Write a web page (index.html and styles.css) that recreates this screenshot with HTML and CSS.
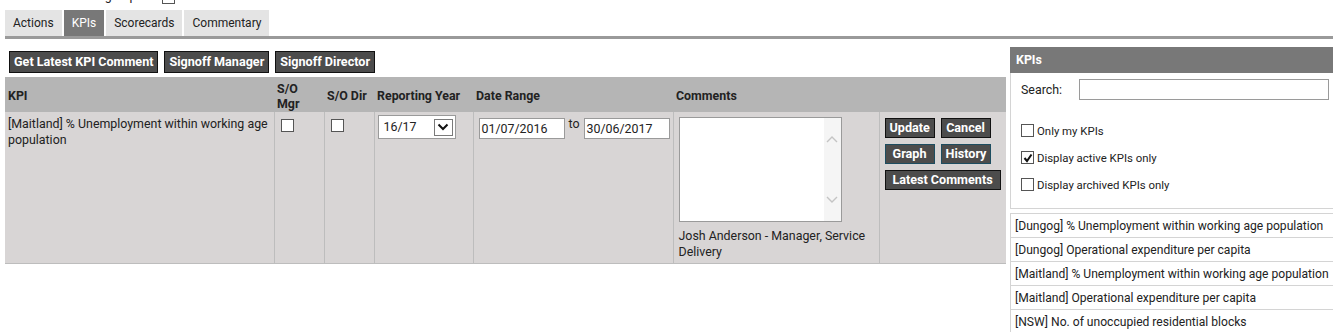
FILE: index.html
```html
<!DOCTYPE html>
<html>
<head>
    <meta charset='utf-8'>
    <title>KPIs</title>
    <link rel="stylesheet" href="styles.css">
</head>
<body>
    <div class='filter-strip'>
        <span class='filter-label'>Show grouped</span>
        <span class='check'></span>
    </div>
    <div class='tabs'>
        <div class='tab'>Actions</div>
        <div class='tab active'>KPIs</div>
        <div class='tab'>Scorecards</div>
        <div class='tab'>Commentary</div>
    </div>
    <div class='page'>
        <div class='main'>
            <div class='toolbar'>
                <div class='btn'>Get Latest KPI Comment</div>
                <div class='btn'>Signoff Manager</div>
                <div class='btn'>Signoff Director</div>
            </div>
            <table class='kpi-table'>
                <colgroup>
                    <col style="width: 269px">
                    <col style="width: 50px">
                    <col style="width: 50px">
                    <col style="width: 99px">
                    <col style="width: 200px">
                    <col style="width: 206px">
                    <col style="width: 127px">
                </colgroup>
                <thead>
                    <tr>
                        <th>KPI</th>
                        <th>S/O Mgr</th>
                        <th>S/O Dir</th>
                        <th>Reporting Year</th>
                        <th>Date Range</th>
                        <th>Comments</th>
                        <th></th>
                    </tr>
                </thead>
                <tbody>
                    <tr>
                        <td>[Maitland] % Unemployment within working age population</td>
                        <td><span class='check cell-check'></span></td>
                        <td><span class='check cell-check'></span></td>
                        <td>
                            <div class='select'>
                                <span class='select-value'>16/17</span>
                                <span class='select-btn'>
                                    <svg width="12" height="8" viewBox="0 0 12 8"><path d="M1.5 1.5 L6 6 L10.5 1.5" fill="none" stroke="#111" stroke-width="2"/></svg>
                                </span>
                            </div>
                        </td>
                        <td>
                            <div class='dates'>
                                <div class='field'>01/07/2016</div>
                                <span class='to'>to</span>
                                <div class='field'>30/06/2017</div>
                            </div>
                        </td>
                        <td>
                            <div class='textarea'>
                                <div class='scroll'>
                                    <svg width="12" height="8" viewBox="0 0 12 8"><path d="M1 7 L6 2 L11 7" fill="none" stroke="#c4c4c4" stroke-width="1.4"/></svg>
                                    <svg width="12" height="8" viewBox="0 0 12 8"><path d="M1 1 L6 6 L11 1" fill="none" stroke="#c4c4c4" stroke-width="1.4"/></svg>
                                </div>
                            </div>
                            <div class='author'>Josh Anderson - Manager, Service Delivery</div>
                        </td>
                        <td>
                            <div class='actions'>
                                <div class='btn small'>Update</div>
                                <div class='btn small'>Cancel</div>
                                <div class='btn small teal'>Graph</div>
                                <div class='btn small teal'>History</div>
                                <div class='btn small wide'>Latest Comments</div>
                            </div>
                        </td>
                    </tr>
                </tbody>
            </table>
        </div>
        <div class='side'>
            <div class='side-head'>KPIs</div>
            <div class='side-box'>
                <div class='search'>
                    <span class='search-label'>Search:</span>
                    <div class='search-input'></div>
                </div>
                <div class='option first'><span class='check'></span>Only my KPIs</div>
                <div class='option'>
                    <span class='check checked'>
                        <svg width="10" height="10" viewBox="0 0 10 10"><path d="M1.5 5 L4 8 L8.5 1.5" fill="none" stroke="#111" stroke-width="2"/></svg>
                    </span>Display active KPIs only
                </div>
                <div class='option'><span class='check'></span>Display archived KPIs only</div>
            </div>
            <div class='kpi-list'>
                <div class='kpi-item'>[Dungog] % Unemployment within working age population</div>
                <div class='kpi-item'>[Dungog] Operational expenditure per capita</div>
                <div class='kpi-item'>[Maitland] % Unemployment within working age population</div>
                <div class='kpi-item'>[Maitland] Operational expenditure per capita</div>
                <div class='kpi-item'>[NSW] No. of unoccupied residential blocks</div>
            </div>
        </div>
    </div>
</body>
</html>
```

FILE: styles.css
```css
body {
    margin: 0;
    padding: 0;
    font-family: Roboto, "Noto Sans", sans-serif;
    font-size: 12.4px;
    color: #222;
    background: #fff;
    overflow: hidden;
}
.filter-strip {
    height: 4px;
    overflow: hidden;
    display: flex;
    align-items: flex-end;
    padding-left: 71px;
    gap: 12px;
}
.filter-label {
    line-height: 12px;
    margin-bottom: 2px;
}
.tabs {
    display: flex;
    gap: 2px;
    margin: 6px 0 0 5px;
    border-bottom: 3px solid #9a9a9a;
}
.tab {
    background-color: #e4e4e4;
    font-size: 12px;
    height: 26px;
    line-height: 26px;
    padding: 0 8px;
}
.tab.active {
    background-color: #787878;
    color: #fff;
}
.page {
    display: flex;
    gap: 4px;
    padding-left: 5px;
}
.main {
    width: 1001px;
    flex-shrink: 0;
    padding-top: 12px;
}
.toolbar {
    display: flex;
    gap: 6px;
    padding-left: 4px;
    margin-bottom: 4px;
}
.btn {
    background-color: #4c4c4c;
    border: 1px solid #111;
    color: #fff;
    font-weight: bold;
    font-size: 12.6px;
    height: 20px;
    line-height: 20px;
    padding: 0 4px;
    white-space: nowrap;
}
.kpi-table {
    width: 1001px;
    table-layout: fixed;
    border-collapse: collapse;
}
.kpi-table th {
    background-color: #b5b5b5;
    text-align: left;
    font-weight: bold;
    height: 33px;
    padding: 2px 3px 0 3px;
    line-height: 15px;
    vertical-align: middle;
}
.kpi-table td {
    background-color: #d8d5d5;
    border: 1px solid #bdbdbd;
    border-top: none;
    vertical-align: top;
    padding: 4px 3px 3px 3px;
    height: 143px;
    line-height: 16px;
}
.kpi-table td:first-child {
    border-left: none;
}
.kpi-table td:last-child {
    border-right: none;
}
.check {
    display: inline-flex;
    justify-content: center;
    align-items: center;
    width: 11px;
    height: 11px;
    border: 1px solid #555;
    background: #fff;
    vertical-align: middle;
    flex-shrink: 0;
}
.cell-check {
    margin: 2px 0 0 3px;
}
.select {
    display: flex;
    align-items: center;
    justify-content: space-between;
    width: 71px;
    height: 22px;
    border: 1px solid #9a9a9a;
    background: #fff;
    padding-left: 5px;
    margin-top: -1px;
}
.select-btn {
    display: flex;
    justify-content: center;
    align-items: center;
    width: 19px;
    height: 17px;
    border: 1px solid #7a7a7a;
    margin-right: 2px;
    box-sizing: border-box;
}
.dates {
    display: flex;
    align-items: flex-start;
    gap: 4px;
    padding-left: 2px;
}
.field {
    width: 82px;
    height: 19px;
    line-height: 19px;
    border: 1px solid #9a9a9a;
    background: #fff;
    padding-left: 2px;
    margin-top: 2px;
}
.to {
    line-height: 16px;
}
.textarea {
    display: flex;
    justify-content: flex-end;
    width: 161px;
    height: 103px;
    border: 1px solid #9a9a9a;
    background: #fff;
    margin: 1px 0 6px 2px;
}
.scroll {
    display: flex;
    flex-direction: column;
    justify-content: space-between;
    align-items: center;
    width: 17px;
    background: #f5f5f5;
    padding: 17px 0 17px 0;
}
.author {
    padding-left: 2px;
}
.actions {
    display: flex;
    flex-wrap: wrap;
    gap: 6px 6px;
    padding: 2px 0 0 2px;
}
.btn.small {
    width: 40px;
    text-align: center;
    height: 18px;
    line-height: 18px;
}
.btn.teal {
    border-color: #1d4d60;
}
.btn.wide {
    width: 106px;
}
.side {
    width: 332px;
    flex-shrink: 0;
    margin-top: 8px;
}
.side-head {
    background-color: #787878;
    color: #fff;
    font-weight: bold;
    height: 26px;
    line-height: 26px;
    padding-left: 6px;
}
.side-box {
    border: 1px solid #d4d4d4;
    border-top: none;
    height: 135px;
    padding: 0 10px;
}
.search {
    display: flex;
    align-items: center;
    gap: 10px;
    padding-top: 6px;
    height: 21px;
}
.search-label {
    width: 48px;
}
.search-input {
    width: 248px;
    height: 19px;
    border: 1px solid #9a9a9a;
}
.option {
    display: flex;
    align-items: center;
    gap: 3px;
    font-size: 11.4px;
    height: 27px;
}
.option.first {
    margin-top: 17px;
}
.kpi-list {
    margin-top: 4px;
    border-top: 1px solid #d4d4d4;
    border-left: 1px solid #d4d4d4;
}
.kpi-item {
    height: 23px;
    line-height: 25px;
    font-size: 12.1px;
    border-bottom: 1px solid #d4d4d4;
    padding-left: 4px;
    white-space: nowrap;
}
```
